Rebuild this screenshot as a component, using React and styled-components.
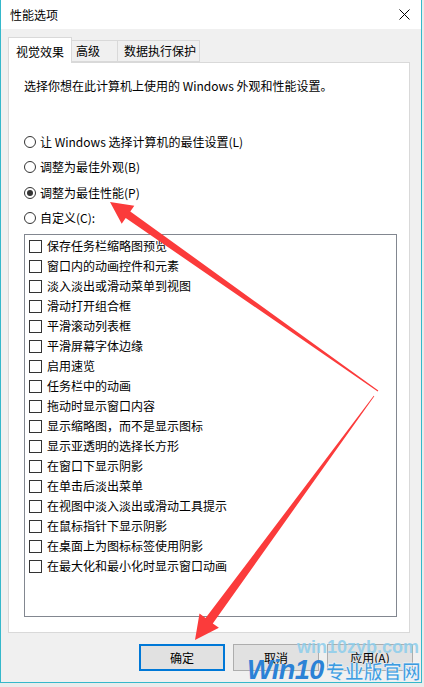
import React from 'react';
import styled, { createGlobalStyle } from 'styled-components';

const GlobalStyle = createGlobalStyle`
  html, body {
    margin:0;
    padding:0;
    background:#ebebeb;
  }
  body {
    font-family:"Noto Sans CJK SC", "Noto Sans", sans-serif;
    font-size:12px;
    color:#000;
  }
`;

const Screen = styled.div`
  position:relative;
  width:424px;
  height:687px;
  overflow:hidden;
`;

const Window = styled.div`
  box-sizing:border-box;
  width:422px;
  height:683px;
  background:#f0f0f0;
  border:1px solid #35b8cb;
  border-top:none;
  display:flex;
  flex-direction:column;
`;

const TitleBar = styled.div`
  height:29px;
  background:#fff;
  display:flex;
  align-items:center;
  justify-content:space-between;
  padding:0 11px 0 9px;
  line-height:16px;
`;

const Body = styled.div`
  padding:8px 8px 0 7px;
  display:flex;
  flex-direction:column;
`;

const TabStrip = styled.div`
  display:flex;
  align-items:flex-end;
  height:25px;
`;

const Tab = styled.div`
  box-sizing:border-box;
  width:${p => p.$w}px;
  height:${p => (p.$active ? 26 : 22)}px;
  margin-bottom:${p => (p.$active ? -1 : 0)}px;
  margin-left:${p => (p.$first ? 0 : -1)}px;
  border:1px solid #d9d9d9;
  border-bottom:${p => (p.$active ? 'none' : '1px solid #d9d9d9')};
  background:${p => (p.$active ? '#fff' : '#f0f0f0')};
  position:relative;
  z-index:${p => (p.$active ? 2 : 0)};
  display:flex;
  align-items:flex-end;
  padding:0 0 ${p => (p.$active ? 3 : 2)}px ${p => p.$pad}px;
  line-height:16px;
`;

const Panel = styled.div`
  box-sizing:border-box;
  width:402px;
  height:571px;
  border:1px solid #d9d9d9;
  background:#fff;
  padding:15px 0 0 15px;
  position:relative;
  z-index:1;
`;

const Description = styled.p`
  margin:0;
  line-height:16px;
`;

const RadioGroup = styled.div`
  margin-top:35px;
  display:flex;
  flex-direction:column;
`;

const RadioRow = styled.label`
  height:25.5px;
  display:flex;
  align-items:center;
  gap:4px;
  line-height:16px;
`;

const RadioDot = styled.span`
  box-sizing:border-box;
  width:12px;
  height:12px;
  border:1px solid #333;
  border-radius:50%;
  display:flex;
  align-items:center;
  justify-content:center;
  &::after {
    content:"";
    width:6px;
    height:6px;
    border-radius:50%;
    background:${p => (p.$checked ? '#333' : 'transparent')};
  }
`;

const ListBox = styled.div`
  box-sizing:border-box;
  margin-top:3px;
  width:373px;
  height:383px;
  border:1px solid #828790;
  padding:1px 0 0 4px;
`;

const CheckRow = styled.label`
  height:20px;
  display:flex;
  align-items:center;
  gap:5px;
  line-height:16px;
`;

const CheckBox = styled.span`
  box-sizing:border-box;
  width:13px;
  height:13px;
  border:1px solid #333;
  background:#fff;
`;

const ButtonRow = styled.div`
  margin-top:11px;
  display:flex;
  justify-content:flex-end;
  gap:8px;
`;

const Button = styled.button`
  box-sizing:border-box;
  width:86px;
  height:27px;
  background:#e1e1e1;
  border:${p => (p.$primary ? '2px solid #0078d7' : '1px solid #adadad')};
  font-family:inherit;
  font-size:12px;
  color:#000;
  padding:0;
`;

const Watermark = styled.div`
  position:absolute;
  left:247px;
  top:636px;
  width:175px;
  z-index:6;
  pointer-events:none;
`;

const SiteUrl = styled.div`
  font-family:"Liberation Sans", Arial, sans-serif;
  font-weight:bold;
  font-size:18px;
  line-height:22px;
  color:rgba(140, 205, 236, 0.85);
  padding-left:50px;
`;

const SiteName = styled.div`
  display:flex;
  align-items:baseline;
  margin-top:-2px;
  line-height:28px;
`;

const SiteWin = styled.span`
  font-family:"Liberation Sans", Arial, sans-serif;
  font-style:italic;
  font-weight:bold;
  font-size:27px;
  color:#2b82d6;
  letter-spacing:-0.5px;
`;

const SiteCn = styled.span`
  font-family:"Noto Sans CJK SC", sans-serif;
  font-weight:bold;
  font-size:19px;
  color:#3d9be0;
  margin-left:2px;
  -webkit-text-stroke:0.5px #ffffff;
`;

const ArrowLayer = styled.svg`
  position:absolute;
  left:0;
  top:0;
  z-index:5;
  pointer-events:none;
`;

const CloseIcon = () => (
  <svg width="11" height="11" viewBox="0 0 11 11">
    <path d="M0.5 0.5 L10.5 10.5 M10.5 0.5 L0.5 10.5" stroke="#000" strokeWidth="1" fill="none" />
  </svg>
);

const radios = [
  { label: '让 Windows 选择计算机的最佳设置(L)' },
  { label: '调整为最佳外观(B)' },
  { label: '调整为最佳性能(P)', checked: true },
  { label: '自定义(C):' },
];

const effects = [
  '保存任务栏缩略图预览',
  '窗口内的动画控件和元素',
  '淡入淡出或滑动菜单到视图',
  '滑动打开组合框',
  '平滑滚动列表框',
  '平滑屏幕字体边缘',
  '启用速览',
  '任务栏中的动画',
  '拖动时显示窗口内容',
  '显示缩略图，而不是显示图标',
  '显示亚透明的选择长方形',
  '在窗口下显示阴影',
  '在单击后淡出菜单',
  '在视图中淡入淡出或滑动工具提示',
  '在鼠标指针下显示阴影',
  '在桌面上为图标标签使用阴影',
  '在最大化和最小化时显示窗口动画',
];

const Arrows = () => (
  <ArrowLayer width="424" height="687" viewBox="0 0 424 687">
    <polygon
      fill="#fb3b3b"
      points="110,202 134.3,205.7 130.3,211.4 378.3,390.6 377.7,391.4 125.7,218 121.7,223.7"
    />
    <polygon
      fill="#fb3b3b"
      points="195,640 199.5,613.6 205.6,618 373.7,395.8 374.3,396.2 212.8,623.4 218.9,627.8"
    />
  </ArrowLayer>
);

export default function App() {
  return (
    <>
      <GlobalStyle />
      <Screen>
        <Window>
          <TitleBar>
            <span>性能选项</span>
            <CloseIcon />
          </TitleBar>
          <Body>
            <TabStrip>
              <Tab $first $active $w={64} $pad={7}>视觉效果</Tab>
              <Tab $w={47} $pad={4}>高级</Tab>
              <Tab $w={83} $pad={6}>数据执行保护</Tab>
            </TabStrip>
            <Panel>
              <Description>选择你想在此计算机上使用的 Windows 外观和性能设置。</Description>
              <RadioGroup>
                {radios.map(r => (
                  <RadioRow key={r.label}>
                    <RadioDot $checked={r.checked} />
                    <span>{r.label}</span>
                  </RadioRow>
                ))}
              </RadioGroup>
              <ListBox>
                {effects.map(e => (
                  <CheckRow key={e}>
                    <CheckBox />
                    <span>{e}</span>
                  </CheckRow>
                ))}
              </ListBox>
            </Panel>
            <ButtonRow>
              <Button $primary>确定</Button>
              <Button>取消</Button>
              <Button>应用(A)</Button>
            </ButtonRow>
          </Body>
        </Window>
        <Arrows />
        <Watermark>
          <SiteUrl>win10zyb.com</SiteUrl>
          <SiteName>
            <SiteWin>Win10</SiteWin>
            <SiteCn>专业版官网</SiteCn>
          </SiteName>
        </Watermark>
      </Screen>
    </>
  );
}
